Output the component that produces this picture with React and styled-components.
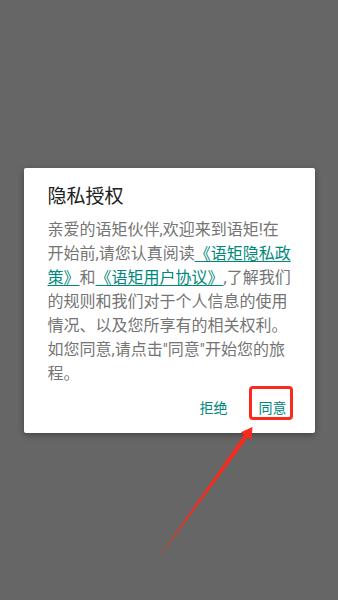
import React from "react";
import styled, { createGlobalStyle } from "styled-components";

const GlobalStyle = createGlobalStyle`
  html, body { margin: 0; padding: 0; background: #666666; }
  body { font-family: "Roboto", "Noto Sans CJK SC", sans-serif; }
`;

const Screen = styled.div`
  position: relative;
  width: 338px;
  height: 600px;
  background: #666666;
  display: flex;
  align-items: center;
  justify-content: center;
  overflow: hidden;
`;

const Dialog = styled.div`
  width: 291px;
  height: 265px;
  box-sizing: border-box;
  background: #ffffff;
  border-radius: 2px;
  box-shadow: 0 2px 6px rgba(0, 0, 0, 0.35);
  display: flex;
  flex-direction: column;
  padding: 15px 0 8px 24px;
`;

const Title = styled.h2`
  margin: 0;
  font-size: 19px;
  font-weight: 400;
  line-height: 28px;
  color: #212121;
`;

const Body = styled.p`
  margin: 7px 0 0 0;
  width: 247px;
  font-size: 16px;
  line-height: 24px;
  color: #757575;
`;

const Link = styled.a`
  color: #00897b;
  text-decoration: underline;
  text-underline-offset: 2px;
`;

const Actions = styled.div`
  margin-top: auto;
  display: flex;
  justify-content: flex-end;
  gap: 3px;
  padding-right: 14px;
`;

const Button = styled.button`
  position: relative;
  height: 36px;
  padding: 0 14px;
  border: none;
  background: transparent;
  font-family: inherit;
  font-size: 14px;
  color: #00897b;
  cursor: pointer;
`;

const Highlight = styled.span`
  position: absolute;
  left: 4px;
  top: -3px;
  width: 44px;
  height: 34px;
  box-sizing: border-box;
  border: 3px solid #fb2a1c;
  border-radius: 4px;
  pointer-events: none;
`;

const ArrowLayer = styled.svg`
  position: absolute;
  inset: 0;
  pointer-events: none;
`;

export default function App() {
  return (
    <>
      <GlobalStyle />
      <Screen>
        <Dialog>
          <Title>隐私授权</Title>
          <Body>
            亲爱的语矩伙伴,欢迎来到语矩!在开始前,请您认真阅读
            <Link>《语矩隐私政策》</Link>和<Link>《语矩用户协议》</Link>
            ,了解我们的规则和我们对于个人信息的使用情况、以及您所享有的相关权利。如您同意,请点击"同意"开始您的旅程。
          </Body>
          <Actions>
            <Button>拒绝</Button>
            <Button>
              同意
              <Highlight />
            </Button>
          </Actions>
        </Dialog>
        <ArrowLayer width="338" height="600" viewBox="0 0 338 600">
          <defs>
            <linearGradient id="ag" x1="252" y1="427" x2="152" y2="567" gradientUnits="userSpaceOnUse">
              <stop offset="0" stopColor="#fb2a1c" />
              <stop offset="0.8" stopColor="#f02a1c" />
              <stop offset="1" stopColor="#c0342a" stopOpacity="0.6" />
            </linearGradient>
          </defs>
          <polygon
            points="252.5,427 251.4,439.8 248,437.3 152,567 244.2,434.7 240.8,432.2"
            fill="url(#ag)"
          />
        </ArrowLayer>
      </Screen>
    </>
  );
}
